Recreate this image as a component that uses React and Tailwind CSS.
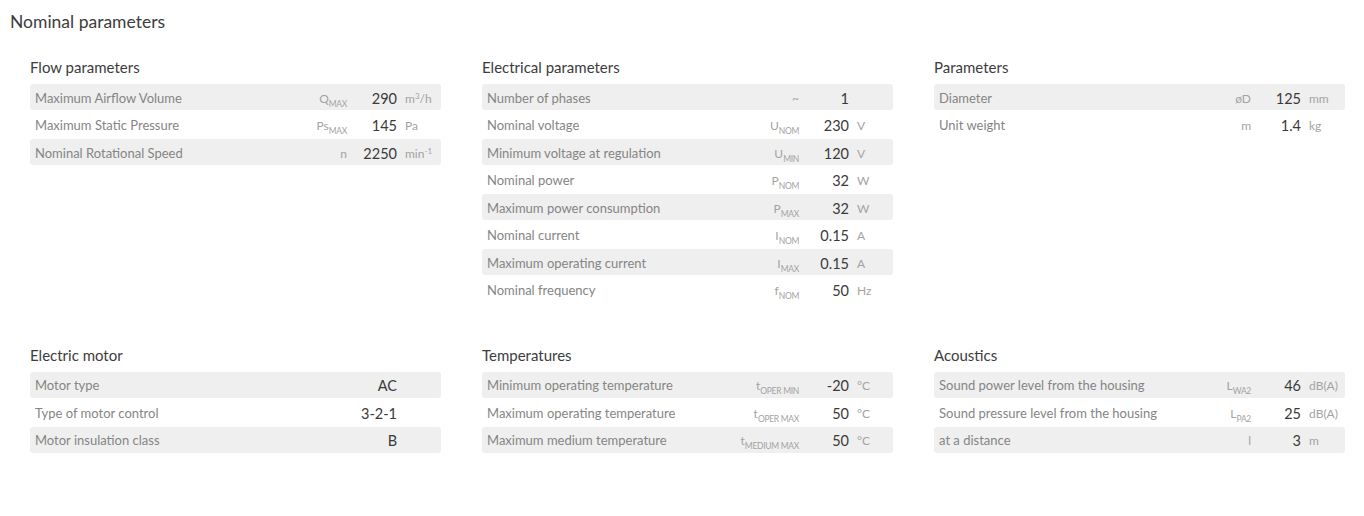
const SECTIONS_TOP = [
  {
    title: "Flow parameters",
    rows: [
      { label: "Maximum Airflow Volume", sym: "Q", sub: "MAX", value: "290", unit: <>m<sup className="text-[8px] relative -top-[4px]">3</sup>/h</> },
      { label: "Maximum Static Pressure", sym: "Ps", sub: "MAX", value: "145", unit: "Pa" },
      { label: "Nominal Rotational Speed", sym: "n", value: "2250", unit: <>min<sup className="text-[8px] relative -top-[4px]">-1</sup></> },
    ],
  },
  {
    title: "Electrical parameters",
    rows: [
      { label: "Number of phases", sym: "~", value: "1", symClass: "text-[9px]" },
      { label: "Nominal voltage", sym: "U", sub: "NOM", value: "230", unit: "V" },
      { label: "Minimum voltage at regulation", sym: "U", sub: "MIN", value: "120", unit: "V" },
      { label: "Nominal power", sym: "P", sub: "NOM", value: "32", unit: "W" },
      { label: "Maximum power consumption", sym: "P", sub: "MAX", value: "32", unit: "W" },
      { label: "Nominal current", sym: "I", sub: "NOM", value: "0.15", unit: "A" },
      { label: "Maximum operating current", sym: "I", sub: "MAX", value: "0.15", unit: "A" },
      { label: "Nominal frequency", sym: "f", sub: "NOM", value: "50", unit: "Hz" },
    ],
  },
  {
    title: "Parameters",
    rows: [
      { label: "Diameter", sym: "øD", value: "125", unit: "mm" },
      { label: "Unit weight", sym: "m", value: "1.4", unit: "kg" },
    ],
  },
];

const SECTIONS_BOTTOM = [
  {
    title: "Electric motor",
    rows: [
      { label: "Motor type", value: "AC" },
      { label: "Type of motor control", value: "3-2-1" },
      { label: "Motor insulation class", value: "B" },
    ],
  },
  {
    title: "Temperatures",
    rows: [
      { label: "Minimum operating temperature", sym: "t", sub: "OPER MIN", value: "-20", unit: "°C" },
      { label: "Maximum operating temperature", sym: "t", sub: "OPER MAX", value: "50", unit: "°C" },
      { label: "Maximum medium temperature", sym: "t", sub: "MEDIUM MAX", value: "50", unit: "°C" },
    ],
  },
  {
    title: "Acoustics",
    rows: [
      { label: "Sound power level from the housing", sym: "L", sub: "WA2", value: "46", unit: "dB(A)" },
      { label: "Sound pressure level from the housing", sym: "L", sub: "PA2", value: "25", unit: "dB(A)" },
      { label: "at a distance", sym: "l", value: "3", unit: "m" },
    ],
  },
];

function Row({ row, shaded }) {
  return (
    <div
      className={
        "flex items-center h-[26px] pt-[3px] rounded-[3px] " +
        (shaded ? "bg-[#efefef]" : "")
      }
    >
      <div className="flex-1 pl-[5px] text-[13px] text-[#858585] truncate">
        {row.label}
      </div>
      <div className={"w-[80px] text-right text-[12px] text-[#a3a3a3] whitespace-nowrap " + (row.symClass || "")}>
        {row.sym}
        {row.sub && (
          <span className="text-[8.5px] relative top-[4px] tracking-[-0.3px]">{row.sub}</span>
        )}
      </div>
      <div className="w-[50px] text-right text-[14.5px] text-[#3a3a3a]">
        {row.value}
      </div>
      <div className="w-[44px] pl-[8px] text-[12px] text-[#a3a3a3] whitespace-nowrap">
        {row.unit}
      </div>
    </div>
  );
}

function Section({ section }) {
  return (
    <div className="w-[411px]">
      <h3 className="text-[15px] leading-[20px] text-[#3c3c3c] mb-[7px]">
        {section.title}
      </h3>
      <div className="flex flex-col gap-[1.5px]">
        {section.rows.map((row, i) => (
          <Row key={row.label} row={row} shaded={i % 2 === 0} />
        ))}
      </div>
    </div>
  );
}

export default function App() {
  return (
    <div
      className="w-[1364px] h-[516px] bg-white pl-[10px] pt-[11px]"
      style={{ fontFamily: "Lato, 'Liberation Sans', sans-serif" }}
    >
      <h2 className="text-[17.5px] leading-[22px] text-[#3c3c3c]">Nominal parameters</h2>
      <div className="pl-[20px] mt-[24px] grid grid-cols-[411px_411px_411px] gap-x-[41px] gap-y-[42px] items-start">
        {SECTIONS_TOP.map((s) => (
          <Section key={s.title} section={s} />
        ))}
        {SECTIONS_BOTTOM.map((s) => (
          <Section key={s.title} section={s} />
        ))}
      </div>
    </div>
  );
}
